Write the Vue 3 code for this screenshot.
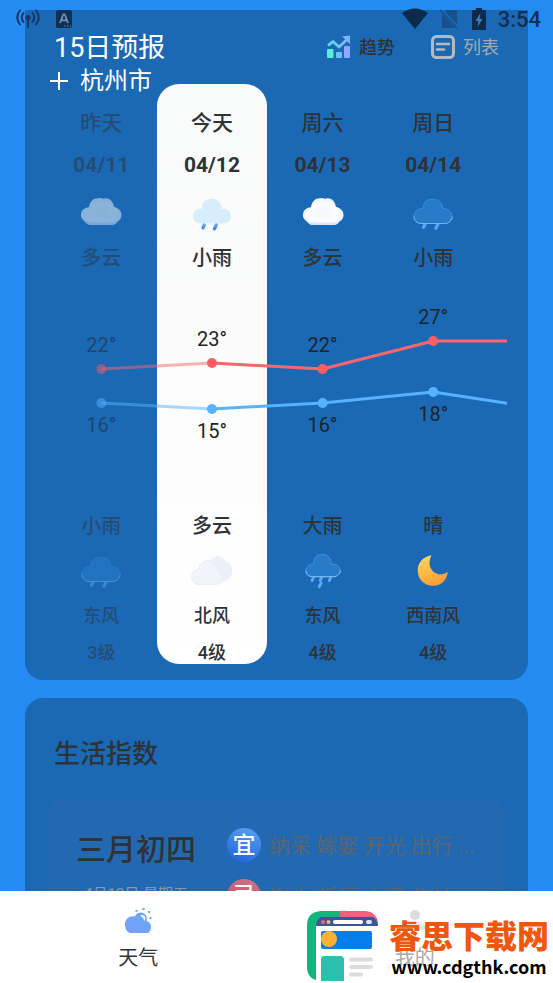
<script setup>
const days = [
  { name: '昨天', date: '04/11', icon: 'cloudy', text: '多云', high: 22, low: 16, nightText: '小雨', nightIcon: 'rain', wind: '东风', level: '3级', past: true },
  { name: '今天', date: '04/12', icon: 'rain-light', text: '小雨', high: 23, low: 15, nightText: '多云', nightIcon: 'clouds', wind: '北风', level: '4级', today: true },
  { name: '周六', date: '04/13', icon: 'cloudy', text: '多云', high: 22, low: 16, nightText: '大雨', nightIcon: 'rain-heavy', wind: '东风', level: '4级' },
  { name: '周日', date: '04/14', icon: 'rain', text: '小雨', high: 27, low: 18, nightText: '晴', nightIcon: 'moon', wind: '西南风', level: '4级' },
]
const highs = [22, 23, 22, 27, 27]
const lows = [16, 15, 16, 18, 15]

const yHigh = (t) => Math.round(94 - (t - 22) * 5.6)
const yLow = (t) => Math.round(128 - (t - 16) * 5.6)
const x = (i) => 12 + i * 24 + '%'

const segments = (values, y) =>
  values.slice(0, -1).map((v, i) => ({ x1: x(i), y1: y(v), x2: x(i + 1), y2: y(values[i + 1]), past: i === 0 }))

const series = [
  { key: 'high', lines: segments(highs, yHigh), dots: days.map((d, i) => ({ x: x(i), y: yHigh(d.high), label: d.high + '°', ly: yHigh(d.high) - 17, past: d.past })) },
  { key: 'low', lines: segments(lows, yLow), dots: days.map((d, i) => ({ x: x(i), y: yLow(d.low), label: d.low + '°', ly: yLow(d.low) + 29, past: d.past })) },
]
</script>

<template>
  <div class="app">
    <svg class="defs" width="0" height="0" aria-hidden="true">
      <defs>
        <radialGradient id="g-cloud" cx=".5" cy=".55" r=".6"><stop offset="0" stop-color="#f5f6fa" /><stop offset=".6" stop-color="#fcfdff" /><stop offset="1" stop-color="#e4edfc" /></radialGradient>
        <linearGradient id="g-drop" x1="0" y1="0" x2="0" y2="1"><stop offset="0" stop-color="#5fa8fb" /><stop offset="1" stop-color="#3b86f4" /></linearGradient>
        <linearGradient id="g-moon" x1=".2" y1="0" x2=".6" y2="1"><stop offset="0" stop-color="#ffd75c" /><stop offset="1" stop-color="#fd9b35" /></linearGradient>
        <linearGradient id="g-trend" x1="0" y1="0" x2="1" y2="0"><stop offset="0" stop-color="#58dfe3" /><stop offset="1" stop-color="#84b4fb" /></linearGradient>
        <linearGradient id="g-tab" x1="0" y1="1" x2="1" y2="0"><stop offset="0" stop-color="#77a0f8" /><stop offset="1" stop-color="#69a7f9" /></linearGradient>
      </defs>
      <symbol id="cloudy" viewBox="0 0 44 44">
        <path d="M10 34.500Q7 33 4 30Q.500 27 1 23.500C1.500 19 5 16 9.500 16C10 10 14 6.500 18.500 6.500Q22 6 24 7Q27 6 30 7Q34.500 9 35.500 15.500C40 16.500 43.500 20 43.500 24Q43.500 28 40 30.500Q37.500 34 34 34.500Z" fill="url(#g-cloud)" />
        <path d="M6 32H38.500Q36.500 34.500 34 34.500H10Q7.500 34.500 6 32Z" fill="#d3e1fb" opacity=".8" />
      </symbol>
      <symbol id="rain" viewBox="0 0 44 44">
        <path d="M13.500 34l-1.500 3M27 34l-2 4" stroke="#5ba2f8" stroke-width="3.500" stroke-linecap="round" />
        <path d="M10 33C5 33 2 29.500 2 25.500C2 20.500 6.500 17 11.500 17.500C11 11 16 7.500 21.500 7.500C27 7.500 32.500 11 32 17.500C37.500 17 42 20.500 42 25.500C42 29.500 39 33 34 33Z" fill="#287bc9" stroke="#3d8dd6" stroke-width="1" />
        <path d="M2 25.500C2 29.500 5 33 10 33H34C39 33 42 29.500 42 25.500" fill="none" stroke="#76b8ee" stroke-width="1" />
      </symbol>
      <symbol id="rain-light" viewBox="0 0 44 44">
        <path d="M10 33C5 33 2 29.500 2 25.500C2 20.500 6.500 17 11.500 17.500C11 11 16 7 21.500 7C27 7 32.500 11 32 17.500C37.500 17 42 20.500 42 25.500C42 29.500 39 33 34 33Z" fill="#d7edfb" />
        <path d="M14 34.500l-1.500 3M26.500 34.500l-2 4" stroke="url(#g-drop)" stroke-width="3.500" stroke-linecap="round" />
      </symbol>
      <symbol id="rain-heavy" viewBox="0 0 44 44">
        <path d="M12.500 28l-2 4M21 28l-2 4M30.500 28l-2 4M20 34.500l-2 4" stroke="#5ca7fa" stroke-width="3" stroke-linecap="round" />
        <path d="M11 28C7 28 4 25 4 21.500C4 17 8 14.500 12.500 15C12 8 16 4.500 21 4.500C26 4.500 31 8 30.500 15C35.500 14.500 40 17 40 21.500C40 25 37 28 33 28Z" fill="#287bc9" stroke="#4292da" stroke-width="1" />
        <path d="M4 21.500C4 25 7 28 11 28H33C37 28 40 25 40 21.500" fill="none" stroke="#88c2f2" stroke-width="1" />
      </symbol>
      <symbol id="clouds" viewBox="0 0 44 44">
        <path d="M19 32C14 28 17 18 20 13C22 5 33 4 36 12C42 14 44 19 43 24C42 29 38 33 32 33Z" fill="#ebeff7" />
        <path d="M7 36C-2 33 -1 21 8 20C9 11 21 7 26 16C28 19 28 22 30 24C36 27 33 36 26 36Z" fill="#f1f4fa" stroke="#e6ebf5" stroke-width="1" />
      </symbol>
      <symbol id="moon" viewBox="0 0 44 44">
        <path d="M20.500 5.500C11 7 6 14 6 21.500C6 31 13 37.500 22 37.500C30 37.500 36.500 32 37.500 23C25 31 13.500 18 20.500 5.500Z" fill="url(#g-moon)" />
      </symbol>
    </svg>

    <header class="status">
      <svg class="st-antenna" viewBox="0 0 24 20" aria-hidden="true">
        <g fill="none" stroke="#15375f" stroke-width="2" stroke-linecap="round">
          <path d="M4 1.500Q-1.500 8.500 4 15.500M7.500 4Q4 8.500 7.500 13M20 1.500Q25.500 8.500 20 15.500M16.500 4Q20 8.500 16.500 13" />
          <path d="M12 9V18" />
        </g>
        <circle cx="12" cy="8.500" r="2.600" fill="#15375f" />
      </svg>
      <svg class="st-input" viewBox="0 0 18 18" aria-hidden="true">
        <rect x="1" width="16" height="18" rx="2" fill="#12304f" />
        <path d="M5 13L8.300 4.500H9.700L13 13M6.300 10.300H11.700" fill="none" stroke="#6293c4" stroke-width="1.800" />
        <path d="M9 16h1.500M12 16h1.500M15 16h1" stroke="#6293c4" stroke-width="1.200" />
      </svg>
      <span class="spacer"></span>
      <svg class="st-wifi" viewBox="0 0 28 22" aria-hidden="true"><path d="M1 5Q14 -4 27 5L14 21Z" fill="#0c2a49" /></svg>
      <svg class="st-sim" viewBox="0 0 18 20" aria-hidden="true"><path d="M6.500 1H17V15L5 2.500ZM2 6V19H15L2 5Z" fill="#17508a" /><path d="M0 1L17 19" stroke="#17508a" stroke-width="1.500" /></svg>
      <svg class="st-battery" viewBox="0 0 14 22" aria-hidden="true"><path d="M4 0H10V2H14V22H0V2H4Z" fill="#0c2a49" /><path d="M8.500 5L3.500 13H6.500L5.500 19L10.500 11H7.500Z" fill="#3f7fbd" /></svg>
      <time>3:54</time>
    </header>

    <div class="city">
      <svg viewBox="0 0 18 18" aria-hidden="true"><path d="M9 0V18M0 9H18" stroke="#fff" stroke-width="2" /></svg>
      <span>杭州市</span>
    </div>

    <main>
      <section class="card forecast">
        <div class="forecast-head">
          <h2>15日预报</h2>
          <button type="button" class="mode active">
            <svg viewBox="0 0 24 24" aria-hidden="true">
              <path d="M1 10.500L6 6.500L12 12L20.500 4" fill="none" stroke="url(#g-trend)" stroke-width="2.800" stroke-linejoin="round" />
              <path d="M15 1.500L23 .5V9Z" fill="#7cb4fa" />
              <rect y="14" width="6.500" height="9" rx="1" fill="#57efd6" />
              <rect x="9" y="17" width="6" height="6" rx="1" fill="#6cc2f3" />
              <rect x="17" y="11" width="6" height="12" rx="1" fill="#8fa7ff" />
            </svg>
            <span>趋势</span>
          </button>
          <button type="button" class="mode">
            <svg viewBox="0 0 24 24" aria-hidden="true">
              <rect x="1.500" y="1.500" width="21" height="21" rx="4" fill="none" stroke="#b5bac0" stroke-width="3" />
              <path d="M6 9H18M6 14.500H13" stroke="#b5bac0" stroke-width="2.500" stroke-linecap="round" />
            </svg>
            <span>列表</span>
          </button>
        </div>

        <div class="scroller">
          <article v-for="d in days" :key="d.date" class="day" :class="{ past: d.past, today: d.today }">
            <strong class="name">{{ d.name }}</strong>
            <strong class="date">{{ d.date }}</strong>
            <svg class="weather-icon"><use :href="'#' + d.icon" /></svg>
            <span class="weather">{{ d.text }}</span>
            <span class="chart-gap"></span>
            <span class="weather">{{ d.nightText }}</span>
            <svg class="weather-icon"><use :href="'#' + d.nightIcon" /></svg>
            <span class="wind">{{ d.wind }}</span>
            <span class="level">{{ d.level }}</span>
          </article>
          <svg class="chart">
            <g v-for="s in series" :key="s.key" :class="s.key">
              <line v-for="(l, i) in s.lines" :key="'l' + i" :x1="l.x1" :y1="l.y1" :x2="l.x2" :y2="l.y2" :class="{ faded: l.past }" />
              <g v-for="(p, i) in s.dots" :key="'d' + i" :class="{ faded: p.past }">
                <circle :cx="p.x" :cy="p.y" r="5" />
                <text :x="p.x" :y="p.ly">{{ p.label }}</text>
              </g>
            </g>
          </svg>
        </div>
      </section>

      <section class="card life">
        <h2>生活指数</h2>
        <div class="almanac">
          <div class="lunar">
            <strong>三月初四</strong>
            <small>4月12日 星期五</small>
          </div>
          <div class="advice">
            <p><b class="good">宜</b><span>纳采 嫁娶 开光 出行 ...</span></p>
            <p><b class="bad">忌</b><span>谢土 祈福 上梁 作灶</span></p>
          </div>
        </div>
      </section>
    </main>

    <nav>
      <a href="#weather" class="tab current">
        <svg viewBox="0 0 28 28" aria-hidden="true">
          <path d="M6 26C2 24.500 1 21 1 17.500C1 11.500 6 8.500 11 9.500C12.500 6 16.500 4.500 20 6.500C23 8.500 23.500 12 22.500 14C26 15 27.500 18 27 21C26.500 23.500 25.500 25 24 26Z" fill="url(#g-tab)" />
          <path d="M16 8.500Q19 7 21 9.500Q22 12 20.500 14Q19 10 16 8.500Z" fill="#f4f8ff" />
          <g fill="#76aafa"><circle cx="12.500" cy="4" r="1.200" /><circle cx="19.500" cy="2" r="1.300" /><circle cx="25" cy="5" r="1.200" /><circle cx="26.500" cy="11" r="1.200" /></g>
        </svg>
        <span>天气</span>
      </a>
      <a href="#mine" class="tab">
        <svg viewBox="0 0 28 28" aria-hidden="true"><circle cx="14" cy="8" r="5" fill="#dcdcdc" /><path d="M3 23Q4 16 10 15H18Q24 16 25 23Z" fill="#e6e6e6" /></svg>
        <span>我的</span>
      </a>
    </nav>

    <aside class="brand">
      <svg viewBox="0 0 72 72" aria-hidden="true">
        <path d="M33 0H59Q69 1 71 11V15H33Z" fill="#f6607f" />
        <path d="M33 0H14Q0 1 0 14V58Q1 67 9 69V15H33Z" fill="#12b57b" />
        <path d="M14 6H66Q70 8 71 15H9Q9 9 14 6Z" fill="#3b5799" />
        <circle cx="16" cy="11" r="2" fill="#f6607f" /><circle cx="21.500" cy="11" r="2" fill="#f6b25b" />
        <rect x="26" y="9" width="30" height="4" rx="2" fill="#fff" /><rect x="59" y="9" width="6" height="4" rx="2" fill="#dbe7fb" />
        <rect x="14" y="20" width="51" height="18" rx="2" fill="#057ee9" />
        <circle cx="22" cy="28" r="8" fill="#f9b233" />
        <path d="M14 70V48Q14 45 17 45H33Q37 45 37 49V70Z" fill="#2bbfae" />
        <path d="M44 48.500H64M44 56H64M44 63.500H54" stroke="#dcdcdc" stroke-width="4" stroke-linecap="round" />
      </svg>
      <div class="brand-text">
        <strong>睿思下载网</strong>
        <span>www.cdgthk.com</span>
      </div>
    </aside>
  </div>
</template>

<style>
body {
  margin: 0;
  background: #248bf2;
}
</style>

<style scoped>
* {
  box-sizing: border-box;
}
.app {
  position: relative;
  display: flex;
  flex-direction: column;
  height: 100vh;
  overflow: hidden;
  background: #248bf2;
  color: #2e3338;
  font-family: Roboto, "Noto Sans CJK SC", sans-serif;
}
.defs {
  position: absolute;
}
h2,
p {
  margin: 0;
}
.status {
  position: absolute;
  inset: 0 0 auto;
  z-index: 2;
  display: flex;
  align-items: center;
  height: 38px;
  padding: 0 12px 0 16px;
  color: #0f2f50;
}
.st-antenna {
  width: 24px;
  height: 20px;
}
.st-input {
  width: 18px;
  height: 18px;
  margin-left: 15px;
}
.spacer {
  flex: 1;
}
.st-wifi {
  width: 28px;
  height: 22px;
}
.st-sim {
  width: 18px;
  height: 20px;
  margin-left: 11px;
}
.st-battery {
  width: 14px;
  height: 22px;
  margin-left: 14px;
}
.status time {
  margin-left: 12px;
  font-size: 22px;
  font-weight: 500;
}
.city {
  position: absolute;
  top: 65px;
  left: 50px;
  z-index: 2;
  display: flex;
  align-items: center;
  gap: 12px;
  color: #fff;
  font-size: 24px;
  line-height: 32px;
}
.city svg {
  width: 18px;
  height: 18px;
}
main {
  flex: 1;
  min-height: 0;
  overflow: hidden;
  padding: 10px 25px 0;
}
.card {
  background: #1b69b5;
  border-radius: 18px;
}
.forecast {
  padding: 21px 21px 16px;
  border-radius: 0 0 18px 18px;
}
.forecast-head {
  display: flex;
  align-items: center;
  height: 32px;
  margin-bottom: 21px;
  padding: 0 8px;
}
.forecast-head h2 {
  margin-right: auto;
  padding-top: 2px;
  color: #fff;
  font-size: 27px;
  font-weight: 400;
  line-height: 32px;
}
.mode {
  display: flex;
  align-items: center;
  gap: 8px;
  margin-left: 36px;
  padding: 0;
  border: 0;
  background: none;
  color: #a5a9ae;
  font: 400 18px/32px Roboto, "Noto Sans CJK SC", sans-serif;
}
.mode span {
  padding-top: 2px;
}
.mode.active {
  color: #2e3338;
  font-weight: 500;
}
.mode svg {
  width: 24px;
  height: 24px;
}
.scroller {
  position: relative;
  display: flex;
  overflow: hidden;
}
.day {
  display: flex;
  flex: 0 0 24%;
  flex-direction: column;
  align-items: center;
  padding-top: 18px;
  border-radius: 22px;
  font-weight: 500;
}
.today {
  background: linear-gradient(#f8f9f9, #fff);
}
.past > * {
  opacity: 0.5;
}
.name {
  font-size: 21px;
  font-weight: 500;
  line-height: 42px;
}
.date {
  font-size: 21px;
  font-weight: 700;
  line-height: 42px;
}
.weather-icon {
  width: 42px;
  height: 54px;
}
.weather {
  font-size: 20px;
  line-height: 36px;
}
.chart-gap {
  height: 232px;
}
.wind {
  font-size: 18px;
  line-height: 36px;
}
.level {
  margin-top: 8px;
  font-size: 18px;
  line-height: 22px;
}
.chart {
  position: absolute;
  top: 191px;
  left: 0;
  width: 100%;
  height: 232px;
}
.chart line {
  stroke-width: 3px;
}
.chart text {
  fill: #202428;
  font-size: 20px;
  text-anchor: middle;
}
.high line {
  stroke: #f9666c;
}
.high circle {
  fill: #fd5c62;
}
.low line {
  stroke: #57b3fc;
}
.low circle {
  fill: #57b3fc;
}
.faded {
  opacity: 0.5;
}
.life {
  margin-top: 18px;
  padding: 40px 24px 24px 23px;
}
.life h2 {
  padding-left: 6px;
  font-size: 26px;
  font-weight: 500;
  line-height: 32px;
}
.almanac {
  display: flex;
  gap: 31px;
  margin-top: 29px;
  padding: 29px 24px 28px 28px;
  border-radius: 12px;
  background: #2269b1;
}
.lunar {
  display: flex;
  flex-direction: column;
  align-items: center;
  padding-top: 4px;
}
.lunar strong {
  font-size: 30px;
  font-weight: 500;
  line-height: 36px;
}
.lunar small {
  margin-top: 14px;
  color: #8c98a8;
  font-size: 15px;
  line-height: 24px;
}
.advice {
  display: flex;
  flex: 1;
  flex-direction: column;
  gap: 17px;
  min-width: 0;
}
.advice p {
  display: flex;
  align-items: center;
  gap: 8px;
  color: #5a6570;
  font-size: 21px;
  line-height: 32px;
  white-space: nowrap;
}
.advice span {
  padding-top: 2px;
}
.advice b {
  width: 34px;
  height: 34px;
  border-radius: 50%;
  color: #fff;
  font-size: 23px;
  font-weight: 500;
  line-height: 36px;
  text-align: center;
}
.good {
  background: linear-gradient(200deg, #5aa5ec, #1e5fe0);
}
.bad {
  background: linear-gradient(200deg, #d0788c, #c83c50);
}
nav {
  display: flex;
  height: 92px;
  background: #fff;
}
.tab {
  display: flex;
  flex: 1;
  flex-direction: column;
  align-items: center;
  padding-top: 16px;
  color: #a9a9a9;
  font-size: 20px;
  line-height: 30px;
  text-decoration: none;
}
.tab.current {
  color: #333;
}
.tab svg {
  width: 28px;
  height: 28px;
  margin-bottom: 8px;
}
.brand {
  position: absolute;
  right: 4px;
  bottom: 0;
  z-index: 3;
  display: flex;
  gap: 10px;
}
.brand svg {
  width: 72px;
  height: 72px;
}
.brand-text {
  display: flex;
  flex-direction: column;
  align-items: center;
  padding-top: 8px;
}
.brand-text strong {
  color: #f0560c;
  font-size: 32px;
  font-weight: 900;
  line-height: 36px;
}
.brand-text span {
  color: #000;
  font: 700 18px/22px "Noto Sans CJK SC", sans-serif;
}
</style>
